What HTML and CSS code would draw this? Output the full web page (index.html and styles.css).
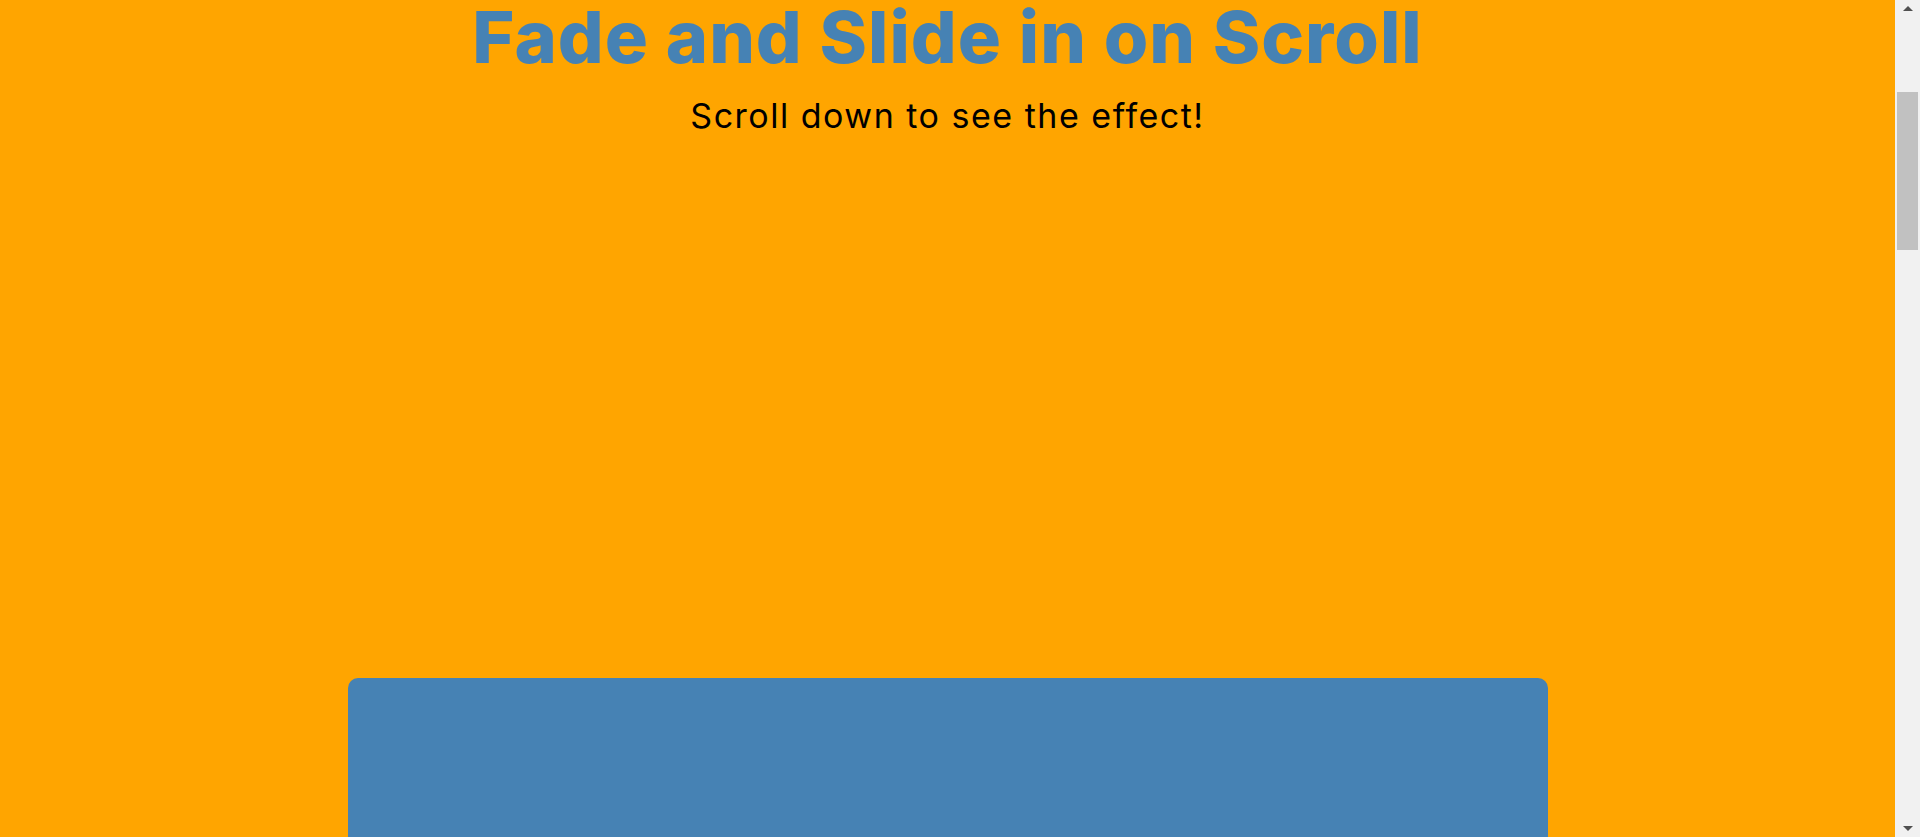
FILE: index.html
```html
<!DOCTYPE html>
<html lang="en">
<head>
<meta charset="utf-8">
<title>Fade and Slide in on Scroll</title>
<link rel="stylesheet" href="styles.css">
</head>
<body>
<div class="page">
  <main class="content">
    <h1 class="title">Fade and Slide in on Scroll</h1>
    <p class="subtitle">Scroll down to see the effect!</p>
    <section class="card"></section>
  </main>
  <div class="scrollbar">
    <div class="arrow arrow-up"></div>
    <div class="track">
      <div class="thumb"></div>
    </div>
    <div class="arrow arrow-down"></div>
  </div>
</div>
</body>
</html>
```
FILE: styles.css
```css
html, body {
  margin: 0;
  padding: 0;
  height: 100%;
  overflow: hidden;
}
body {
  background: #ffa500;
  font-family: "Inter", "Noto Sans", sans-serif;
}
.page {
  display: flex;
  height: 837px;
  overflow: hidden;
}
.content {
  flex: 1;
  display: flex;
  flex-direction: column;
  align-items: center;
  background: #ffa500;
}
.title {
  margin: 0;
  font-size: 72px;
  line-height: 74px;
  font-weight: 800;
  color: #4682b4;
  letter-spacing: 1px;
}
.subtitle {
  margin: 22px 0 0;
  font-size: 34px;
  line-height: 40px;
  font-weight: 400;
  color: #000;
  letter-spacing: 1.5px;
}
.card {
  margin-top: 542px;
  width: 1200px;
  height: 400px;
  flex-shrink: 0;
  background: #4682b4;
  border-radius: 10px;
}
.scrollbar {
  width: 25px;
  flex-shrink: 0;
  background: #f1f1f1;
  display: flex;
  flex-direction: column;
  align-items: center;
}
.arrow {
  height: 17px;
  width: 25px;
  display: flex;
  align-items: center;
  justify-content: center;
}
.arrow-up::before {
  content: "";
  border-left: 5px solid transparent;
  border-right: 5px solid transparent;
  border-bottom: 5px solid #505050;
}
.arrow-down::before {
  content: "";
  border-left: 5px solid transparent;
  border-right: 5px solid transparent;
  border-top: 5px solid #505050;
}
.track {
  flex: 1;
  width: 100%;
  display: flex;
  justify-content: center;
}
.thumb {
  margin-top: 75px;
  width: 21px;
  height: 158px;
  background: #c1c1c1;
}
```
